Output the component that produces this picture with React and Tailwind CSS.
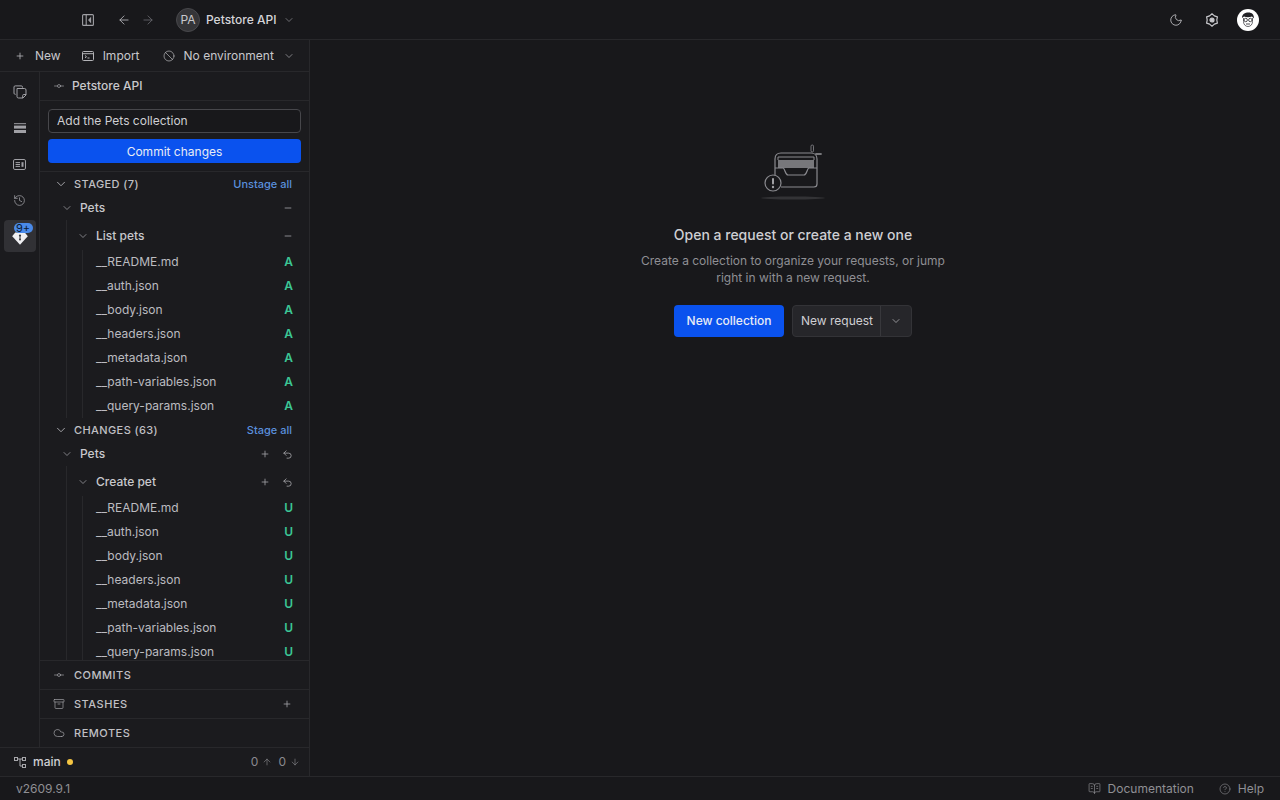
import React from 'react'
import {
  ArrowLeft, ArrowRight, ChevronDown, Plus, Ban, GitCommitHorizontal, History, Archive, Cloud,
  Moon, CircleHelp, BookOpenText, Undo2, Minus, ArrowUp, ArrowDown,
} from 'lucide-react'

const stagedFiles = ['__README.md', '__auth.json', '__body.json', '__headers.json', '__metadata.json', '__path-variables.json', '__query-params.json']

const SectionHeader = ({ title, action }) => (
  <div className="flex h-6 items-center pl-[14px] pr-[17px]">
    <ChevronDown className="h-3.5 w-3.5 text-[#b4b4b8]" strokeWidth={1.5} />
    <span className="ml-[6px] flex-1 text-[11px] font-medium tracking-[0.4px] text-[#c0c0c4]">{title}</span>
    <span className="text-[11px] font-medium text-[#5a8fdc]">{action}</span>
  </div>
)

const FolderRow = ({ name, indent, children }) => (
  <div className={`flex h-6 items-center pr-[16px] ${indent}`}>
    <ChevronDown className="h-3 w-3 text-[#a0a0a5]" strokeWidth={1.5} />
    <span className="ml-[7px] flex-1 text-xs font-medium text-[#c8c8cc]">{name}</span>
    {children}
  </div>
)

const FileRow = ({ name, status }) => (
  <div className="flex h-6 items-center pl-[13px] pr-[16px]">
    <span className="flex-1 text-xs text-[#bcbcc0]">{name}</span>
    <span className="text-xs font-semibold text-[#3cc796]">{status}</span>
  </div>
)

const StageActions = () => (
  <div className="flex items-center gap-[12px]">
    <Plus className="h-2.5 w-2.5 text-[#a0a0a5]" strokeWidth={2} />
    <Undo2 className="h-[11px] w-[11px] text-[#b4b4b8]" strokeWidth={1.6} />
  </div>
)

const Tree = ({ folder, request, status, actions }) => (
  <>
    <FolderRow name={folder} indent="pl-[21px]">{actions}</FolderRow>
    <div className="ml-[26px] border-l border-[#28282b] pt-1">
      <FolderRow name={request} indent="pl-[10px]">{actions}</FolderRow>
      <div className="ml-[15px] mt-[2px] border-l border-[#28282b]">
        {stagedFiles.map((f) => <FileRow key={f} name={f} status={status} />)}
      </div>
    </div>
  </>
)

const CollectionsIcon = () => (
  <svg viewBox="0 0 14 14" className="h-[14px] w-[14px]" fill="none" stroke="currentColor" strokeWidth="1">
    <path d="M9.5 2.6V2A1.2 1.2 0 0 0 8.3.9H2.2A1.2 1.2 0 0 0 1 2v6.2a1.2 1.2 0 0 0 1.2 1.1h.5" />
    <path d="M4 3.5h7.5A1.5 1.5 0 0 1 13 5v5l-3 3H5.5A1.5 1.5 0 0 1 4 11.5z" />
    <path d="M13 9.5h-2.2A1 1 0 0 0 9.7 10.5V13" />
  </svg>
)

const RequestsIcon = () => (
  <svg viewBox="0 0 12 10" className="h-[10px] w-[12px]" fill="currentColor">
    <rect x="0" y="0" width="12" height="1.2" opacity="0.8" />
    <rect x="0" y="2.6" width="12" height="3" />
    <rect x="0" y="7" width="12" height="3" />
  </svg>
)

const EnvIcon = () => (
  <svg viewBox="0 0 13 11" className="h-[11px] w-[13px]" fill="none" stroke="currentColor" strokeWidth="1">
    <rect x="0.5" y="0.5" width="12" height="10" rx="1.4" />
    <path d="M2.6 3.6H7M2.6 5.5H7M2.6 7.4H7" />
    <rect x="8.5" y="3.2" width="2" height="4.6" fill="currentColor" stroke="none" />
  </svg>
)

const GitGemIcon = () => (
  <svg viewBox="0 0 16 13" className="h-[13px] w-[16px]">
    <path d="M3.2.5H12.8L15.8 4.2L8 12.8L.2 4.2Z" fill="#f0f0f2" />
    <circle cx="8" cy="3.5" r="1.1" fill="#3a3a3e" />
    <rect x="7.5" y="3.5" width="1" height="4" fill="#3a3a3e" />
    <circle cx="8" cy="7.5" r="1" fill="#3a3a3e" />
  </svg>
)

const SidebarToggleIcon = () => (
  <svg viewBox="0 0 12 12" className="h-3 w-3 text-[#a0a0a5]" fill="none" stroke="currentColor" strokeWidth="1.1">
    <rect x="0.6" y="0.6" width="10.8" height="10.8" rx="1" />
    <path d="M4.2.6V11.4" />
    <path d="M8.6 4L6.8 6L8.6 8Z" fill="currentColor" />
  </svg>
)

const GearIcon = () => (
  <svg viewBox="0 0 14 14" className="h-[14px] w-[14px] text-[#c8c8cc]" fill="none" stroke="currentColor" strokeWidth="1.2">
    <path d="M7 .8L9.4 2.84L12.4 3.9L11.8 7L12.4 10.1L9.4 11.16L7 13.2L4.6 11.16L1.6 10.1L2.2 7L1.6 3.9L4.6 2.84Z" strokeLinejoin="round" />
    <circle cx="7" cy="7" r="2" fill="currentColor" />
  </svg>
)

const AvatarIcon = () => (
  <svg viewBox="0 0 22 22" className="h-[22px] w-[22px]">
    <circle cx="11" cy="11" r="11" fill="#ffffff" />
    <path d="M5 9C5 5 8 3.5 11.5 3.5C15 3.5 17 5.5 17 9.5L15 7.5C12.5 8.5 9 8.5 7 7.5Z" fill="#222226" />
    <path d="M6.5 9V12.5C6.5 15.5 8.5 17.5 11 17.5C13.5 17.5 15.5 15.5 15.5 12.5V9" fill="none" stroke="#44444a" strokeWidth="0.8" />
    <circle cx="8.7" cy="11" r="1.7" fill="none" stroke="#222226" strokeWidth="0.8" />
    <circle cx="13.3" cy="11" r="1.7" fill="none" stroke="#222226" strokeWidth="0.8" />
    <path d="M9 15H13" stroke="#222226" strokeWidth="0.8" />
  </svg>
)

const BranchIcon = () => (
  <svg viewBox="0 0 12 11" className="h-[11px] w-3 text-[#a8a8ac]" fill="none" stroke="currentColor" strokeWidth="1">
    <rect x="0.5" y="0.5" width="3" height="3" />
    <rect x="8.5" y="0.5" width="3" height="3" />
    <rect x="8.5" y="7.5" width="3" height="3" />
    <path d="M3.5 2H8.5M6 2V9H8.5" />
  </svg>
)

const EmptyIllustration = () => (
  <svg viewBox="0 0 70 62" className="h-[62px] w-[70px]" fill="none">
    <ellipse cx="35" cy="54" rx="32" ry="1.5" fill="#333336" />
    <path d="M17 32V15C17 11 19 9 23 9H53C56 9 59 11 59 15V40C59 42 58 43 56 43H23" stroke="#8a8a8f" strokeWidth="1.2" />
    <path d="M20 16V13H56V16" stroke="#8a8a8f" strokeWidth="1" />
    <rect x="20" y="16" width="36" height="8" fill="#77777b" />
    <path d="M17 24H25C27 24 27 31 30 31H46C49 31 49 24 51 24H59" stroke="#8a8a8f" strokeWidth="1.2" />
    <circle cx="15" cy="39" r="8" fill="#18181b" stroke="#8a8a8f" strokeWidth="1.2" />
    <path d="M15 35V39.5" stroke="#a0a0a4" strokeWidth="2" strokeLinecap="round" />
    <circle cx="15" cy="43" r="1.2" fill="#a0a0a4" />
    <rect x="53" y="1" width="2.5" height="7" rx="1.2" stroke="#8a8a8f" strokeWidth="0.8" />
    <path d="M58 10H63" stroke="#77777b" strokeWidth="1.8" strokeLinecap="round" />
  </svg>
)

const RailButton = ({ children, active }) => (
  <div className={`relative flex h-8 w-8 items-center justify-center rounded ${active ? 'bg-[#313135] text-white' : 'text-[#a0a0a5]'}`}>
    {children}
  </div>
)

const FooterSection = ({ icon, title, children }) => (
  <div className="flex h-[29px] shrink-0 items-center border-t border-[#28282b] pl-[13px] pr-[17px]">
    {icon}
    <span className="ml-[9px] flex-1 text-[11px] font-medium tracking-[0.5px] text-[#c0c0c4]">{title}</span>
    {children}
  </div>
)

export default function App() {
  return (
    <div className="flex h-screen w-full flex-col overflow-hidden bg-[#18181b] font-['Inter',sans-serif] text-xs text-[#cfcfd3]">
      {/* top bar */}
      <header className="flex h-10 shrink-0 items-center border-b border-[#28282b] pl-[82px] pr-[21px]">
        <SidebarToggleIcon />
        <ArrowLeft className="ml-[23px] h-3.5 w-3.5 text-[#b4b4b8]" strokeWidth={1.5} />
        <ArrowRight className="ml-[10px] h-3.5 w-3.5 text-[#66666b]" strokeWidth={1.5} />
        <div className="ml-[21px] flex h-6 w-6 items-center justify-center rounded-full border border-[#48484c] bg-[#353538] text-xs text-[#c8c8cc]">PA</div>
        <span className="ml-[6px] font-medium text-[#d4d4d8]">Petstore API</span>
        <ChevronDown className="ml-[7px] h-3 w-3 text-[#8a8a8f]" strokeWidth={1.5} />
        <div className="ml-auto flex items-center">
          <Moon className="h-[14px] w-[14px] text-[#c8c8cc]" strokeWidth={1.4} />
          <span className="ml-[22px]"><GearIcon /></span>
          <span className="ml-[18px] flex"><AvatarIcon /></span>
        </div>
      </header>

      <div className="flex min-h-0 flex-1">
        {/* sidebar */}
        <aside className="flex w-[310px] shrink-0 flex-col border-r border-[#28282b] bg-[#1b1b1e]">
          <div className="flex h-[32px] shrink-0 items-center border-b border-[#28282b] pl-[15px] pr-[14px]">
            <Plus className="h-[10px] w-[10px] text-[#b4b4b8]" strokeWidth={2} />
            <span className="ml-[10px] text-[#c8c8cc]">New</span>
            <svg viewBox="0 0 12 10" className="ml-[21px] h-[10px] w-3 text-[#b4b4b8]" fill="none" stroke="currentColor" strokeWidth="1">
              <rect x="0.5" y="0.5" width="11" height="9" rx="1" />
              <path d="M.5 2.7H11.5M3 4.5L4.5 5.7L3 7M5.5 7H7.5" />
            </svg>
            <span className="ml-[9px] text-[#c8c8cc]">Import</span>
            <Ban className="ml-[23px] h-3 w-3 text-[#b4b4b8]" strokeWidth={1.4} />
            <span className="ml-[9px] whitespace-nowrap text-[#c8c8cc]">No environment</span>
            <ChevronDown className="ml-auto h-3 w-3 text-[#a0a0a5]" strokeWidth={1.5} />
          </div>

          <div className="flex min-h-0 flex-1">
            <nav className="flex w-10 shrink-0 flex-col items-center gap-1 border-r border-[#28282b] pt-1">
              <RailButton><CollectionsIcon /></RailButton>
              <RailButton><RequestsIcon /></RailButton>
              <RailButton><EnvIcon /></RailButton>
              <RailButton><History className="h-[13px] w-[13px]" strokeWidth={1.4} /></RailButton>
              <RailButton active>
                <span className="mt-[5px] flex"><GitGemIcon /></span>
                <span className="absolute left-[10px] top-[3px] flex h-[10px] w-[19px] items-center justify-center rounded-full bg-[#4a8ae8] text-[11px] leading-none text-[#0c1a30]">9+</span>
              </RailButton>
            </nav>

            <div className="flex min-w-0 flex-1 flex-col">
              <div className="flex h-[29px] shrink-0 items-center border-b border-[#28282b] pl-[13px]">
                <GitCommitHorizontal className="h-[12px] w-[12px] text-[#a0a0a5]" strokeWidth={1.4} />
                <span className="ml-[7px] font-medium text-[#c8c8cc]">Petstore API</span>
              </div>

              <div className="flex shrink-0 flex-col gap-[6px] border-b border-[#28282b] px-2 pb-[8px] pt-2">
                <div className="flex h-6 items-center rounded border border-[#47474b] bg-[#18181b] px-2 text-[#cfcfd3]">Add the Pets collection</div>
                <div className="flex h-6 items-center justify-center rounded bg-[#0a52ee] pt-px text-[#e8ecf5]">Commit changes</div>
              </div>

              <div className="min-h-0 flex-1 overflow-hidden">
                <SectionHeader title="STAGED (7)" action="Unstage all" />
                <Tree folder="Pets" request="List pets" status="A" actions={<Minus className="h-2.5 w-2.5 text-[#a0a0a5]" strokeWidth={2} />} />
                <SectionHeader title="CHANGES (63)" action="Stage all" />
                <Tree folder="Pets" request="Create pet" status="U" actions={<StageActions />} />
              </div>

              <FooterSection icon={<GitCommitHorizontal className="h-3 w-3 text-[#a0a0a5]" strokeWidth={1.4} />} title="COMMITS" />
              <FooterSection icon={<Archive className="h-3 w-3 text-[#a0a0a5]" strokeWidth={1.4} />} title="STASHES">
                <Plus className="h-2.5 w-2.5 text-[#a0a0a5]" strokeWidth={2} />
              </FooterSection>
              <FooterSection icon={<Cloud className="h-3 w-3 text-[#a0a0a5]" strokeWidth={1.4} />} title="REMOTES" />
            </div>
          </div>

          <div className="flex h-[29px] shrink-0 items-center border-t border-[#28282b] pl-[14px] pr-[9px]">
            <BranchIcon />
            <span className="ml-[7px] font-medium text-[#cfcfd3]">main</span>
            <span className="ml-[6px] h-[6px] w-[6px] rounded-full bg-[#f5c542]" />
            <span className="ml-auto text-[#8a8a8f]">0</span>
            <ArrowUp className="ml-[4px] h-2.5 w-2.5 text-[#8a8a8f]" strokeWidth={1.5} />
            <span className="ml-[6px] text-[#8a8a8f]">0</span>
            <ArrowDown className="ml-[4px] h-2.5 w-2.5 text-[#8a8a8f]" strokeWidth={1.5} />
          </div>
        </aside>

        {/* empty state */}
        <main className="flex flex-1 flex-col items-center pr-[4px] pt-[104px]">
          <EmptyIllustration />
          <h2 className="mt-[19px] text-sm font-medium text-[#cfcfd3]">Open a request or create a new one</h2>
          <p className="mt-[7px] w-[320px] text-center text-xs leading-[17px] text-[#8f8f94]">Create a collection to organize your requests, or jump right in with a new request.</p>
          <div className="mt-[19px] flex items-center gap-2">
            <button className="flex h-8 w-[110px] items-center justify-center rounded bg-[#0a52ee] text-xs font-medium text-[#e8ecf5]">New collection</button>
            <div className="flex h-8 w-[120px] items-center rounded border border-[#333337] bg-[#26262a]">
              <span className="flex-1 pl-2 text-xs text-[#cfcfd3]">New request</span>
              <span className="flex h-full w-[31px] items-center justify-center border-l border-[#38383c]">
                <ChevronDown className="h-3 w-3 text-[#b4b4b8]" strokeWidth={1.5} />
              </span>
            </div>
          </div>
        </main>
      </div>

      {/* status bar */}
      <footer className="flex h-6 shrink-0 items-center border-t border-[#28282b] pl-4 pr-[16px] text-xs text-[#8f8f94]">
        <span>v2609.9.1</span>
        <BookOpenText className="ml-auto h-[13px] w-[13px]" strokeWidth={1.2} />
        <span className="ml-[7px]">Documentation</span>
        <CircleHelp className="ml-[25px] h-[12px] w-[12px]" strokeWidth={1.2} />
        <span className="ml-[7px]">Help</span>
      </footer>
    </div>
  )
}
